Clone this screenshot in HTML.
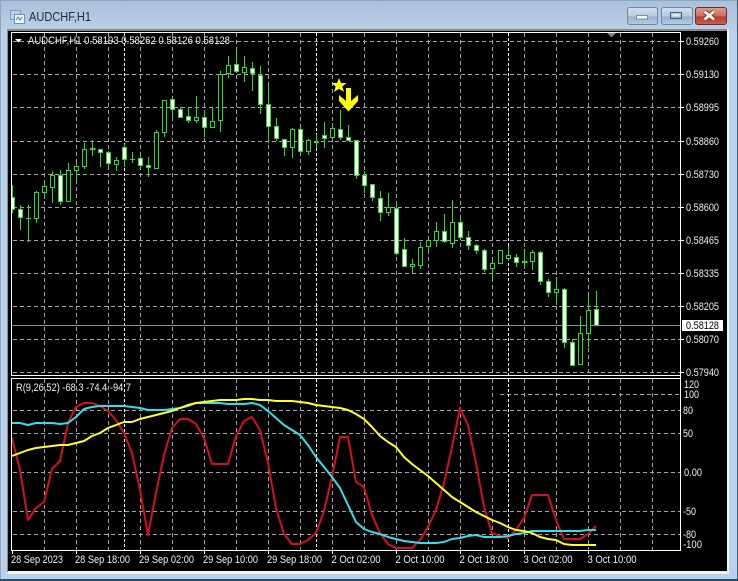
<!DOCTYPE html>
<html><head><meta charset="utf-8"><title>AUDCHF,H1</title>
<style>
html,body{margin:0;padding:0;width:738px;height:581px;overflow:hidden;background:#b9d1ea}
svg{display:block;position:absolute;left:0;top:0}
text{font-family:"Liberation Sans",sans-serif;font-size:11px;fill:#f0f0f0}
</style></head><body>
<svg width="738" height="581" viewBox="0 0 738 581" xmlns="http://www.w3.org/2000/svg">
<defs>
<linearGradient id="ti" x1="0" y1="0" x2="0" y2="1"><stop offset="0" stop-color="#a9c0d9"/><stop offset="1" stop-color="#b9cfe6"/></linearGradient>
<linearGradient id="bt" x1="0" y1="0" x2="0" y2="1"><stop offset="0" stop-color="#d3e0ec"/><stop offset=".5" stop-color="#b8cce0"/><stop offset=".55" stop-color="#98b3cd"/><stop offset="1" stop-color="#b5cde3"/></linearGradient>
<linearGradient id="rd" x1="0" y1="0" x2="0" y2="1"><stop offset="0" stop-color="#dba08f"/><stop offset=".5" stop-color="#cc6d5a"/><stop offset=".55" stop-color="#b63d2f"/><stop offset="1" stop-color="#c9604c"/></linearGradient>
</defs>
<!-- window frame -->
<rect width="738" height="581" fill="#b9d1ea"/>
<rect width="738" height="29" fill="url(#ti)"/>
<rect x="0" y="0" width="738" height="1" fill="#8fa6bd"/>
<rect x="0" y="0" width="1" height="581" fill="#8fa6bd"/>
<rect x="737" y="0" width="1" height="581" fill="#3f5f7a"/>
<rect x="0" y="579" width="738" height="2" fill="#2b4a66"/>
<rect x="7" y="29" width="722" height="545" fill="#f2f5f8"/>
<rect x="7" y="29" width="720" height="2" fill="#8a8a8a"/>
<rect x="7" y="29" width="1" height="543" fill="#8a8a8a"/>
<rect x="8" y="31" width="719" height="540" fill="#000"/>
<!-- title -->
<g>
<rect x="10.5" y="10.5" width="10" height="9" fill="#b9d3ec" stroke="#7ba0c6"/>
<rect x="14.5" y="14.5" width="10" height="9" fill="#f3f7fb" stroke="#6b92ba"/>
<path d="M16 20l2-3 2 3 2-3" fill="none" stroke="#4a78a8"/>
</g>
<text x="29" y="21" style="font-size:12.500px;fill:#1e2a36" textLength="62" lengthAdjust="spacingAndGlyphs">AUDCHF,H1</text>
<!-- buttons -->
<rect x="627.5" y="7.500" width="30" height="17" rx="2.500" fill="url(#bt)" stroke="#6a87a5"/>
<rect x="636.5" y="15.500" width="11" height="3.500" fill="#f4f7fa" stroke="#56718e" stroke-width=".7"/>
<rect x="661.5" y="7.500" width="31" height="17" rx="2.500" fill="url(#bt)" stroke="#6a87a5"/>
<rect x="670.5" y="12.500" width="11" height="6" fill="none" stroke="#3f5a76"/>
<rect x="672.5" y="14.500" width="7" height="2" fill="#e9f0f6"/>
<rect x="695.5" y="7.500" width="31" height="17" rx="2.500" fill="url(#rd)" stroke="#6b2a30"/>
<path d="M704.500 11.500l9.500 8M714 11.500l-9.500 8" stroke="#5b2a2a" stroke-width="4.600"/>
<path d="M704.500 11.500l9.500 8M714 11.500l-9.500 8" stroke="#f4efe8" stroke-width="3"/>
<!-- grid main -->
<g shape-rendering="crispEdges">
<path fill="none" stroke="#a4a4a4" stroke-dasharray="4 3" d="M13 41.500H680M13 74.500H680M13 107.500H680M13 141.500H680M13 174.500H680M13 207.500H680M13 240.500H680M13 273.500H680M13 306.500H680M13 339.500H680M13 372.500H680M13 410.500H680M13 433.500H680M13 472.500H680M13 511.500H680M13 534.500H680M500 394.500H680"/>
<path fill="none" stroke="#a4a4a4" stroke-dasharray="4 3" d="M44.500 33V375M76.500 33V375M108.500 33V375M140.500 33V375M172.500 33V375M204.500 33V375M236.500 33V375M268.500 33V375M300.500 33V375M332.500 33V375M364.500 33V375M396.500 33V375M428.500 33V375M460.500 33V375M492.500 33V375M524.500 33V375M556.500 33V375M588.500 33V375M620.500 33V375M652.500 33V375M44.500 379V550M76.500 379V550M108.500 379V550M140.500 379V550M172.500 379V550M204.500 379V550M236.500 379V550M268.500 379V550M300.500 379V550M332.500 379V550M364.500 379V550M396.500 379V550M428.500 379V550M460.500 379V550M492.500 379V550M524.500 379V550M556.500 379V550M588.500 379V550M620.500 379V550M652.500 379V550"/>
<path fill="none" stroke="#fff" stroke-dasharray="3 2" d="M124.500 33V375M316.500 33V375M508.500 33V375M124.500 379V550M316.500 379V550M508.500 379V550"/>
<path d="M12 325.500H680" stroke="#8f8f8f"/>
<!-- wicks -->
<path fill="none" stroke="#30d830" d="M12.500 185V213M20.500 205V230M28.500 205V242M36.500 191V223M44.500 180V199M52.500 171V203M60.500 170V205M68.500 163V202M76.500 163V180M84.500 143V169M92.500 140V156M100.500 149V167M108.500 151V167M116.500 157V171M124.500 144V167M132.500 152V163M140.500 156V168M148.500 157V177M156.500 130V168M164.500 100V137M172.500 99V119M180.500 107V117M188.500 107V123M196.500 96V123M204.500 110V137M212.500 108V127M220.500 71V132M228.500 56V78M236.500 50V73M244.500 56V82M252.500 62V91M260.500 66V114M268.500 86V143M276.500 118V141M284.500 139V156M292.500 128V158M300.500 126V154M308.500 139V155M316.500 134V148M324.500 122V148M332.500 123V137M340.500 110V140M348.500 125V140M356.500 140V179M364.500 171V193M372.500 184V201M380.500 191V221M388.500 193V216M396.500 201V255M404.500 238V266M412.500 259V273M420.500 242V269M428.500 240V252M436.500 222V247M444.500 214V243M452.500 200V248M460.500 218V238M468.500 231V250M476.500 244V254M484.500 249V272M492.500 260V279M500.500 250V263M508.500 246V261M516.500 254V267M524.500 249V269M532.500 250V270M540.500 251V285M548.500 279V297M556.500 277V305M564.500 288V348M572.500 339V366M580.500 316V365M588.500 296V347M596.500 291V325"/>
<!-- doji -->
<path fill="none" stroke="#30d830" d="M26 218.500h5M130 159.500h5M314 142.500h5"/>
<path fill="none" stroke="#30d830" stroke-width="2" d="M90 149h5.500M522 262h5.500"/>
<!-- hollow bodies -->
<path fill="#000" stroke="#30d830" d="M34.500 192.500h4V218.500h-4zM42.500 186.500h4V192.500h-4zM50.500 175.500h4V187.500h-4zM66.500 170.500h4V201.500h-4zM74.500 166.500h4V170.500h-4zM82.500 149.500h4V166.500h-4zM114.500 160.500h4V164.500h-4zM154.500 132.500h4V168.500h-4zM162.500 100.500h4V132.500h-4zM194.500 117.500h4V120.500h-4zM210.500 121.500h4V127.500h-4zM218.500 74.500h4V120.500h-4zM226.500 65.500h4V73.500h-4zM242.500 67.500h4V72.500h-4zM290.500 129.500h4V147.500h-4zM306.500 140.500h4V151.500h-4zM330.500 128.500h4V137.500h-4zM386.500 207.500h4V212.500h-4zM410.500 264.500h4V266.500h-4zM418.500 247.500h4V265.500h-4zM426.500 240.500h4V246.500h-4zM434.500 231.500h4V240.500h-4zM450.500 222.500h4V243.500h-4zM490.500 263.500h4V268.500h-4zM498.500 250.500h4V263.500h-4zM506.500 255.500h4V258.500h-4zM530.500 252.500h4V261.500h-4zM554.500 289.500h4V292.500h-4zM578.500 333.500h4V364.500h-4zM586.500 310.500h4V333.500h-4z"/>
<!-- filled bodies -->
<path fill="#fff" stroke="#30d830" d="M10.500 197.500h4V209.500h-4zM18.500 209.500h4V217.500h-4zM58.500 175.500h4V201.500h-4zM98.500 149.500h4V152.500h-4zM106.500 152.500h4V163.500h-4zM122.500 147.500h4V159.500h-4zM138.500 158.500h4V165.500h-4zM146.500 165.500h4V167.500h-4zM170.500 99.500h4V109.500h-4zM178.500 109.500h4V117.500h-4zM186.500 116.500h4V120.500h-4zM202.500 117.500h4V127.500h-4zM234.500 64.500h4V71.500h-4zM250.500 68.500h4V73.500h-4zM258.500 75.500h4V104.500h-4zM266.500 104.500h4V126.500h-4zM274.500 126.500h4V138.500h-4zM282.500 139.500h4V147.500h-4zM298.500 129.500h4V151.500h-4zM322.500 135.500h4V138.500h-4zM338.500 129.500h4V137.500h-4zM346.500 137.500h4V140.500h-4zM354.500 140.500h4V175.500h-4zM362.500 175.500h4V185.500h-4zM370.500 184.500h4V197.500h-4zM378.500 198.500h4V212.500h-4zM394.500 208.500h4V253.500h-4zM402.500 249.500h4V266.500h-4zM442.500 231.500h4V241.500h-4zM458.500 222.500h4V237.500h-4zM466.500 237.500h4V245.500h-4zM474.500 245.500h4V250.500h-4zM482.500 250.500h4V269.500h-4zM514.500 257.500h4V262.500h-4zM538.500 252.500h4V281.500h-4zM546.500 281.500h4V292.500h-4zM562.500 289.500h4V342.500h-4zM570.500 342.500h4V365.500h-4zM594.500 309.500h4V325.500h-4z"/>
</g>
<!-- star + arrow -->
<polygon points="339,78 341,83 346.500,83 342.300,86.500 344,92 339,88.800 334,92 335.700,86.500 331.500,83 337,83" fill="#ffff00"/>
<polygon points="346,88 351,88 351,101 358,95 358,101 348.500,111.500 339,101 339,95 346,101" fill="#ffff00"/>
<!-- indicator -->
<polyline fill="none" stroke="#d41020" stroke-width="2" stroke-linejoin="round" points="12,438 20,470 28,520 36,508 44,502 52,469 60,461 68,423 76,407 84,403 92,403 100,406 108,411 116,420 124,433 132,453 140,490 148,535 156,493 164,455 172,428 180,419 188,419 196,424 204,438 212,464 220,464 228,464 236,436 244,421 252,417 260,430 268,463 276,508 284,534 292,544 300,544 308,540 316,533 324,511 332,477 340,437 348,437 356,482 364,487 372,515 380,533 388,544 396,548 404,548 412,548 420,540 428,527 436,510 444,483 452,447 460,408 468,425 476,463 484,507 492,533 500,536 508,538 516,530 524,518 532,495 540,495 548,495 556,520 564,539 572,539 580,539 588,534 596,526"/>
<polyline fill="none" stroke="#30e0ea" stroke-width="2" stroke-linejoin="round" points="12,423 20,423 28,425 36,423 44,423 52,423 60,424 68,423 76,417 84,409 92,407 100,406 108,406 116,406 124,406 132,407 140,408 148,410 156,410 164,410 172,409 180,408 188,406 196,403 204,403 212,403 220,403 228,404 236,404 244,404 252,403 260,405 268,411 276,418 284,425 292,430 300,435 308,445 316,457 324,467 332,477 340,488 348,505 356,522 364,529 372,532 380,534 388,537 396,539 404,541 412,542 420,543 428,543 436,543 444,542 452,539 460,538 468,536 476,535 484,537 492,537 500,537 508,536 516,534 524,533 532,531 540,531 548,531 556,531 564,531 572,531 580,531 588,530 596,530"/>
<polyline fill="none" stroke="#ffff22" stroke-width="2" stroke-linejoin="round" points="12,456 20,453 28,450 36,448 44,447 52,446 60,445 68,445 76,443 84,441 92,436 100,433 108,428 116,425 124,422 132,422 140,419 148,417 156,415 164,413 172,411 180,408 188,405 196,403 204,402 212,401 220,400 228,400 236,400 244,399 252,399 260,400 268,400 276,401 284,401 292,401 300,402 308,403 316,405 324,406 332,407 340,408 348,410 356,414 364,419 372,427 380,436 388,442 396,447 404,457 412,464 420,470 428,476 436,483 444,490 452,497 460,502 468,507 476,512 484,516 492,520 500,523 508,527 516,530 524,531 532,533 540,537 548,539 556,540 564,544 572,545 580,545 588,545 596,545"/>
<!-- frame lines -->
<rect x="8" y="32" width="3" height="519" fill="#000"/>
<g shape-rendering="crispEdges">
<path fill="none" stroke="#fff" d="M11.500 33V375M11.500 378V550M11 32.500H681M680.500 32V551M11 375.500H681M11 378.500H681M11 550.500H681"/>
<path fill="none" stroke="#fff" d="M681 41.500h3M681 74.500h3M681 107.500h3M681 141.500h3M681 174.500h3M681 207.500h3M681 240.500h3M681 273.500h3M681 306.500h3M681 339.500h3M681 372.500h3M12.500 551v3M76.500 551v3M140.500 551v3M204.500 551v3M268.500 551v3M332.500 551v3M396.500 551v3M460.500 551v3M524.500 551v3M588.500 551v3"/>
</g>
<polygon points="607,33 616,33 611.500,37.500" fill="#808080"/>
<polygon points="15,39 22,39 18.500,42.500" fill="#fff"/>
<!-- legends -->
<text x="28" y="44" textLength="202" lengthAdjust="spacingAndGlyphs">AUDCHF,H1  0.58193 0.58262 0.58126 0.58128</text>
<text x="16" y="391" textLength="115" lengthAdjust="spacingAndGlyphs">R(9,26,52) -68.3 -74.4 -94.7</text>
<!-- price axis -->
<text x="686" y="45" textLength="33" lengthAdjust="spacingAndGlyphs">0.59260</text>
<text x="686" y="78" textLength="33" lengthAdjust="spacingAndGlyphs">0.59130</text>
<text x="686" y="111" textLength="33" lengthAdjust="spacingAndGlyphs">0.58995</text>
<text x="686" y="145" textLength="33" lengthAdjust="spacingAndGlyphs">0.58860</text>
<text x="686" y="178" textLength="33" lengthAdjust="spacingAndGlyphs">0.58730</text>
<text x="686" y="211" textLength="33" lengthAdjust="spacingAndGlyphs">0.58600</text>
<text x="686" y="244" textLength="33" lengthAdjust="spacingAndGlyphs">0.58465</text>
<text x="686" y="277" textLength="33" lengthAdjust="spacingAndGlyphs">0.58335</text>
<text x="686" y="310" textLength="33" lengthAdjust="spacingAndGlyphs">0.58205</text>
<text x="686" y="343" textLength="33" lengthAdjust="spacingAndGlyphs">0.58070</text>
<text x="686" y="376" textLength="33" lengthAdjust="spacingAndGlyphs">0.57940</text>
<rect x="682" y="320" width="41" height="11" fill="#fff"/>
<text x="686" y="329" style="fill:#000" textLength="33" lengthAdjust="spacingAndGlyphs">0.58128</text>
<!-- indicator axis -->
<text x="684" y="388" textLength="15" lengthAdjust="spacingAndGlyphs">120</text>
<text x="684" y="398" textLength="15" lengthAdjust="spacingAndGlyphs">100</text>
<text x="683" y="414" textLength="10" lengthAdjust="spacingAndGlyphs">80</text>
<text x="683" y="437" textLength="10" lengthAdjust="spacingAndGlyphs">50</text>
<text x="684" y="476" textLength="18" lengthAdjust="spacingAndGlyphs">0.00</text>
<text x="683" y="515" textLength="13" lengthAdjust="spacingAndGlyphs">-50</text>
<text x="683" y="538" textLength="13" lengthAdjust="spacingAndGlyphs">-80</text>
<text x="683" y="548" textLength="19" lengthAdjust="spacingAndGlyphs">-100</text>
<!-- time axis -->
<text x="11" y="563" textLength="52" lengthAdjust="spacingAndGlyphs">28 Sep 2023</text>
<text x="75" y="563" textLength="55" lengthAdjust="spacingAndGlyphs">28 Sep 18:00</text>
<text x="139" y="563" textLength="55" lengthAdjust="spacingAndGlyphs">29 Sep 02:00</text>
<text x="203" y="563" textLength="55" lengthAdjust="spacingAndGlyphs">29 Sep 10:00</text>
<text x="267" y="563" textLength="55" lengthAdjust="spacingAndGlyphs">29 Sep 18:00</text>
<text x="331.500" y="563" textLength="49" lengthAdjust="spacingAndGlyphs">2 Oct 02:00</text>
<text x="395.500" y="563" textLength="49" lengthAdjust="spacingAndGlyphs">2 Oct 10:00</text>
<text x="459.500" y="563" textLength="49" lengthAdjust="spacingAndGlyphs">2 Oct 18:00</text>
<text x="523.500" y="563" textLength="49" lengthAdjust="spacingAndGlyphs">3 Oct 02:00</text>
<text x="587.500" y="563" textLength="49" lengthAdjust="spacingAndGlyphs">3 Oct 10:00</text>
</svg>
</body></html>
